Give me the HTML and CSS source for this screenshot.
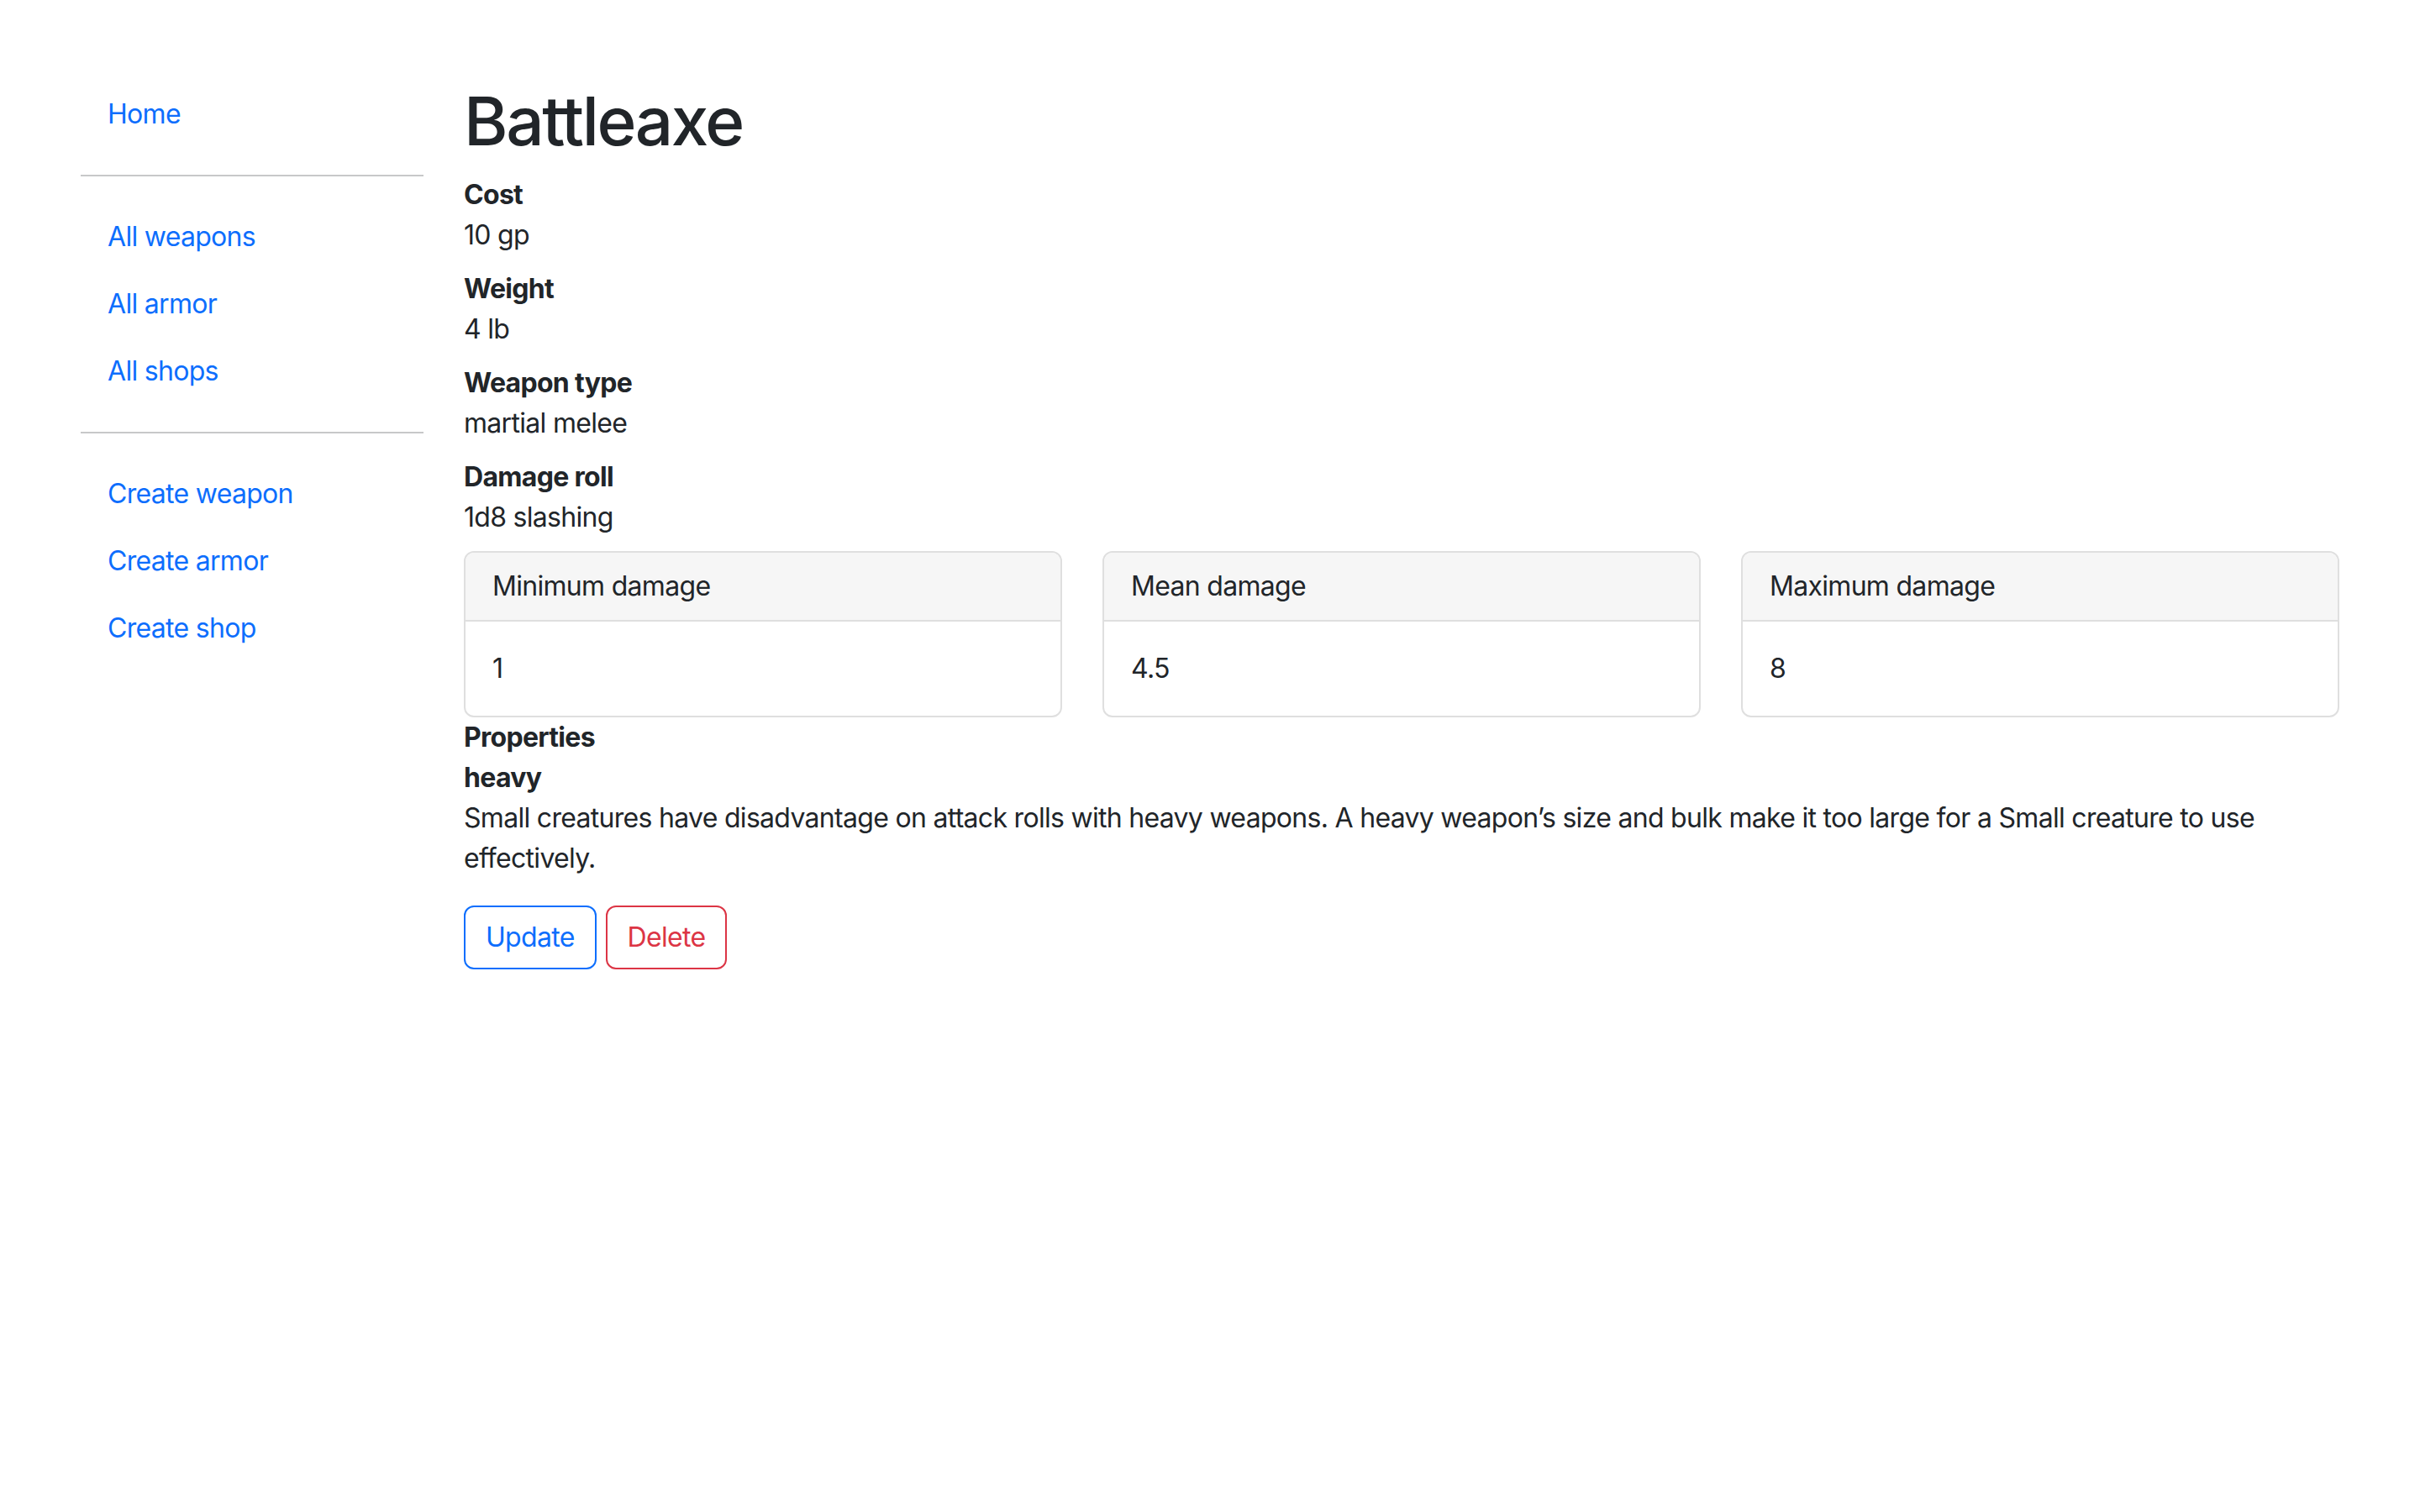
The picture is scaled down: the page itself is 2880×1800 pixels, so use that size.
FILE: index.html
```html
<!DOCTYPE html>
<html lang="en">
<head>
<meta charset="utf-8">
<title>Battleaxe</title>
<link rel="stylesheet" href="styles.css">
</head>
<body>
<div class="page">
  <nav class="sidebar">
    <ul class="nav">
      <li><a class="nav-link" href="#">Home</a></li>
    </ul>
    <hr class="divider">
    <ul class="nav">
      <li><a class="nav-link" href="#">All weapons</a></li>
      <li><a class="nav-link" href="#">All armor</a></li>
      <li><a class="nav-link" href="#">All shops</a></li>
    </ul>
    <hr class="divider">
    <ul class="nav">
      <li><a class="nav-link" href="#">Create weapon</a></li>
      <li><a class="nav-link" href="#">Create armor</a></li>
      <li><a class="nav-link" href="#">Create shop</a></li>
    </ul>
  </nav>
  <main class="content">
    <h1 class="title">Battleaxe</h1>
    <dl class="stats">
      <dt>Cost</dt>
      <dd>10 gp</dd>
      <dt>Weight</dt>
      <dd>4 lb</dd>
      <dt>Weapon type</dt>
      <dd>martial melee</dd>
      <dt>Damage roll</dt>
      <dd>1d8 slashing</dd>
    </dl>
    <div class="cards">
      <div class="card">
        <div class="card-header">Minimum damage</div>
        <div class="card-body">1</div>
      </div>
      <div class="card">
        <div class="card-header">Mean damage</div>
        <div class="card-body">4.5</div>
      </div>
      <div class="card">
        <div class="card-header">Maximum damage</div>
        <div class="card-body">8</div>
      </div>
    </div>
    <div class="properties">
      <div class="prop-label">Properties</div>
      <div class="prop-name">heavy</div>
      <p class="prop-desc">Small creatures have disadvantage on attack rolls with heavy weapons. A heavy weapon’s size and bulk make it too large for a Small creature to use effectively.</p>
    </div>
    <div class="actions">
      <a class="btn btn-primary" href="#">Update</a>
      <button class="btn btn-danger" type="button">Delete</button>
    </div>
  </main>
</div>
</body>
</html>
```

FILE: styles.css
```css
* {
  box-sizing: border-box;
}

html, body {
  margin: 0;
  padding: 0;
  background: #ffffff;
}

body {
  font-family: Inter, "Noto Sans", "Liberation Sans", sans-serif;
  font-size: 32px;
  line-height: 48px;
  color: #212529;
  letter-spacing: -0.7px;
}

.page {
  display: grid;
  grid-template-columns: 408px 1fr;
  column-gap: 48px;
  padding: 96px 96px 96px 96px;
  align-items: start;
}

.nav {
  list-style: none;
  margin: 0;
  padding: 0;
}

.nav-link {
  display: block;
  padding: 16px 32px;
  color: #0d6efd;
  text-decoration: none;
}

.divider {
  margin: 32px 0;
  border: 0;
  border-top: 2px solid #212529;
  opacity: 0.25;
}

.content {
  min-width: 0;
}

.title {
  margin: 0 0 16px 0;
  font-size: 80px;
  line-height: 96px;
  font-weight: 500;
  letter-spacing: -2.4px;
}

.stats {
  margin: 0;
}

.stats dt {
  font-weight: 700;
}

.stats dd {
  margin: 0 0 16px 0;
}

.cards {
  display: grid;
  grid-template-columns: repeat(3, 1fr);
  column-gap: 48px;
}

.card {
  border: 2px solid #dfdfdf;
  border-radius: 12px;
  overflow: hidden;
  background: #ffffff;
}

.card-header {
  padding: 16px 32px;
  background: #f6f6f6;
  border-bottom: 2px solid #dfdfdf;
}

.card-body {
  padding: 32px 32px;
}

.properties {
  margin: 0;
}

.prop-label,
.prop-name {
  font-weight: 700;
}

.prop-desc {
  margin: 0 0 32px 0;
}

.actions {
  display: flex;
  gap: 11px;
}

.btn {
  display: inline-block;
  font-family: inherit;
  font-size: 32px;
  line-height: 48px;
  letter-spacing: -0.7px;
  padding: 12px 24px;
  border: 2px solid transparent;
  border-radius: 12px;
  background: transparent;
  text-decoration: none;
  cursor: pointer;
}

.btn-primary {
  color: #0d6efd;
  border-color: #0d6efd;
}

.btn-danger {
  color: #dc3545;
  border-color: #dc3545;
}
```
